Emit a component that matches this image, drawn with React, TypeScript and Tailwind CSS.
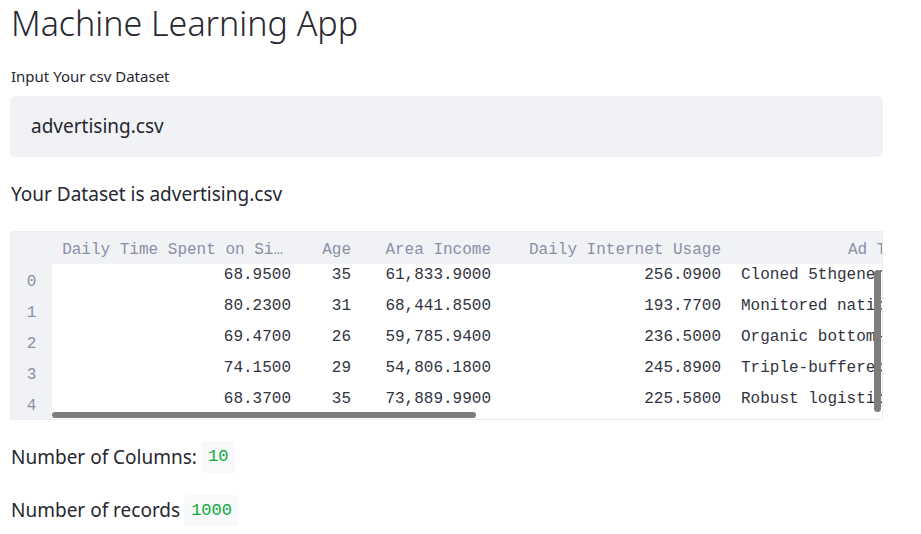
import React from "react";

const SANS = "font-['Noto_Sans',_'Open_Sans',_sans-serif]";
const MONO = "font-['Liberation_Mono',_'DejaVu_Sans_Mono',_monospace]";

type Row = {
  time: string;
  age: string;
  income: string;
  usage: string;
  topic: string;
};

const ROWS: Row[] = [
  { time: "68.9500", age: "35", income: "61,833.9000", usage: "256.0900", topic: "Cloned 5thgeneration orchestration" },
  { time: "80.2300", age: "31", income: "68,441.8500", usage: "193.7700", topic: "Monitored national standardization" },
  { time: "69.4700", age: "26", income: "59,785.9400", usage: "236.5000", topic: "Organic bottom-line service-desk" },
  { time: "74.1500", age: "29", income: "54,806.1800", usage: "245.8900", topic: "Triple-buffered reciprocal time-frame" },
  { time: "68.3700", age: "35", income: "73,889.9900", usage: "225.5800", topic: "Robust logistical utilization" },
];

// fixed column widths, like the dataframe canvas
const COLS = "grid grid-cols-[41px_247px_60px_140px_230px_300px]";

function DataFrame() {
  return (
    <div className={`relative mt-[24px] h-[189px] w-[873px] overflow-hidden border border-[#eceef3] ${MONO} text-[16px]`}>
      <div className={`${COLS} h-[32px] items-center bg-[#f0f2f6] pt-[4px] text-[#8b90a6]`}>
        <div />
        <div className="truncate pr-[16px] text-right">Daily Time Spent on Si…</div>
        <div className="pr-[8px] text-right">Age</div>
        <div className="pr-[8px] text-right">Area Income</div>
        <div className="pr-[8px] text-right">Daily Internet Usage</div>
        <div className="whitespace-nowrap pl-[119px]">Ad Topic Line</div>
      </div>
      {ROWS.map((r, i) => (
        <div key={i} className={`${COLS} h-[31px]`}>
          <div className="flex items-center justify-center bg-[#f0f2f6] pt-[5px] text-[#8b90a6]">{i}</div>
          <div className="pb-[10px] pt-[3px] pr-[8px] text-right leading-[16px] text-[#31333f]">{r.time}</div>
          <div className="pb-[10px] pt-[3px] pr-[8px] text-right leading-[16px] text-[#31333f]">{r.age}</div>
          <div className="pb-[10px] pt-[3px] pr-[8px] text-right leading-[16px] text-[#31333f]">{r.income}</div>
          <div className="pb-[10px] pt-[3px] pr-[8px] text-right leading-[16px] text-[#31333f]">{r.usage}</div>
          <div className="overflow-hidden whitespace-nowrap pb-[10px] pt-[3px] pl-[12px] leading-[16px] text-[#31333f]">{r.topic}</div>
        </div>
      ))}
      {/* scrollbars */}
      <div className="absolute left-[41px] top-[180px] h-[6px] w-[424px] rounded-full bg-[#7d7d7d]" />
      <div className="absolute left-[863px] top-[38px] h-[142px] w-[7px] rounded-full bg-[#7d7d7d]" />
    </div>
  );
}

export default function App() {
  return (
    <div className={`min-h-[534px] bg-white px-[10px] text-[#262730] ${SANS}`}>
      <h1 className="pl-[1px] text-[34px] font-light leading-[46px]">Machine Learning App</h1>

      <label className="mt-[21px] block pl-[1px] text-[15px] leading-[18px]">Input Your csv Dataset</label>
      <div className="mt-[11px] flex h-[61px] w-[873px] items-center rounded-[6px] bg-[#f0f2f6] pl-[21px] text-[19px]">
        advertising.csv
      </div>

      <p className="mt-[24px] pl-[1px] text-[19px] leading-[26px]">Your Dataset is advertising.csv</p>

      <DataFrame />

      <div className="mt-[21px] flex items-center gap-[4px] pl-[1px] text-[19px]">
        <span>Number of Columns:</span>
        <code className={`rounded-[4px] bg-[#f8f9fa] px-[7px] py-[3px] text-[17px] text-[#09ab3b] ${MONO}`}>10</code>
      </div>
      <div className="mt-[22px] flex items-center gap-[4px] pl-[1px] text-[19px]">
        <span>Number of records</span>
        <code className={`rounded-[4px] bg-[#f8f9fa] px-[7px] py-[3px] text-[17px] text-[#09ab3b] ${MONO}`}>1000</code>
      </div>
    </div>
  );
}
